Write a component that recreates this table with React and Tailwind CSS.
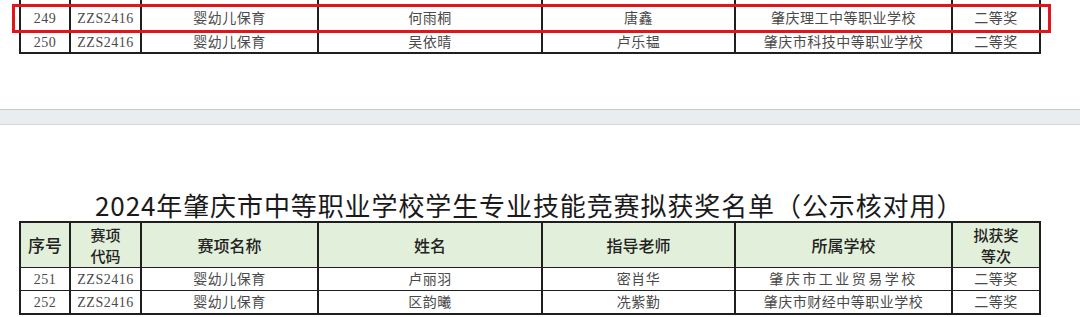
import React from "react";

const colW = ["w-[50px]", "w-[71px]", "w-[177px]", "w-[224px]", "w-[193px]", "w-[217px]", "w-[88px]"];

const bodyFont = { fontFamily: "'Liberation Serif', 'Noto Sans CJK SC', serif" };

function Row({ cells, className = "", cellClass = "" }) {
  return (
    <div className={`flex ${className}`}>
      {colW.map((w, i) => (
        <div
          key={i}
          className={`${w} shrink-0 border-r-2 border-[#1f1f1f] flex flex-col items-center justify-center text-center ${cellClass} ${cells && cells[i] && cells[i].cls ? cells[i].cls : ""}`}
        >
          {cells ? cells[i].text : null}
        </div>
      ))}
    </div>
  );
}

const c = (text, cls = "") => ({ text, cls });

// header cell that wraps onto two lines
const two = (a, b) => (
  <>
    <span className="block h-[21px] text-[15px] leading-[21px]">{a}</span>
    <span className="block h-[21px] text-[15px] leading-[21px]">{b}</span>
  </>
);

function TopTable() {
  return (
    <div className="relative h-[54px]">
      <div
        className="ml-[19px] w-[1022px] border-l-2 border-[#1f1f1f] text-[14px] text-[#4a4a4a] tracking-[0.5px]"
        style={bodyFont}
      >
        <Row className="h-[5px] border-b border-[#1f1f1f]" />
        <Row
          className="h-[28px] border-b border-[#1f1f1f]"
          cells={[c("249"), c("ZZS2416"), c("婴幼儿保育"), c("何雨桐"), c("唐鑫"), c("肇庆理工中等职业学校"), c("二等奖")]}
        />
        <Row
          className="h-[21px] border-b-2 border-[#1f1f1f]"
          cells={[c("250"), c("ZZS2416"), c("婴幼儿保育"), c("吴依晴"), c("卢乐韫"), c("肇庆市科技中等职业学校"), c("二等奖")]}
        />
      </div>
      {/* red highlight box */}
      <div className="absolute left-[12px] top-[4px] w-[1039px] h-[29px] border-[3px] border-[#e3141c]" />
    </div>
  );
}

function BottomTable() {
  return (
    <div className="ml-[19px] w-[1022px] border-l-2 border-t-2 border-[#1f1f1f]">
      <Row
        className="h-[45px] border-b border-[#1f1f1f] bg-[#e2efda] text-[16px] leading-[20px] text-[#222]"
        cellClass="font-medium"
        cells={[
          c("序号", "font-black text-[17px]"),
          c(two("赛项", "代码")),
          c("赛项名称"),
          c("姓名"),
          c("指导老师"),
          c("所属学校"),
          c(two("拟获奖", "等次")),
        ]}
      />
      <div className="text-[14px] text-[#4a4a4a] tracking-[0.5px]" style={bodyFont}>
        <Row
          className="h-[23px] border-b border-[#1f1f1f]"
          cells={[c("251"), c("ZZS2416"), c("婴幼儿保育"), c("卢丽羽"), c("密肖华"), c("肇庆市工业贸易学校", "tracking-[2.5px]"), c("二等奖")]}
        />
        <Row
          className="h-[24px] border-b-2 border-[#1f1f1f]"
          cells={[c("252"), c("ZZS2416"), c("婴幼儿保育"), c("区韵曦"), c("冼紫勤"), c("肇庆市财经中等职业学校"), c("二等奖")]}
        />
      </div>
    </div>
  );
}

export default function App() {
  return (
    <div
      className="w-[1080px] h-[317px] overflow-hidden bg-white"
      style={{ fontFamily: "'Noto Sans CJK SC', sans-serif" }}
    >
      <TopTable />

      {/* page gap */}
      <div className="mt-[55px] h-[16px] bg-[#e9edf0] border-t border-b border-t-[#c9cccd] border-b-[#d6d9db]" />

      {/* Title */}
      <div className="mt-[65px] h-[31px] pl-[95px] text-[26px] leading-[30px] text-[#1a1a1a] tracking-[0.9px] whitespace-nowrap">
        2024年肇庆市中等职业学校学生专业技能竞赛拟获奖名单（公示核对用）
      </div>

      <BottomTable />
    </div>
  );
}
